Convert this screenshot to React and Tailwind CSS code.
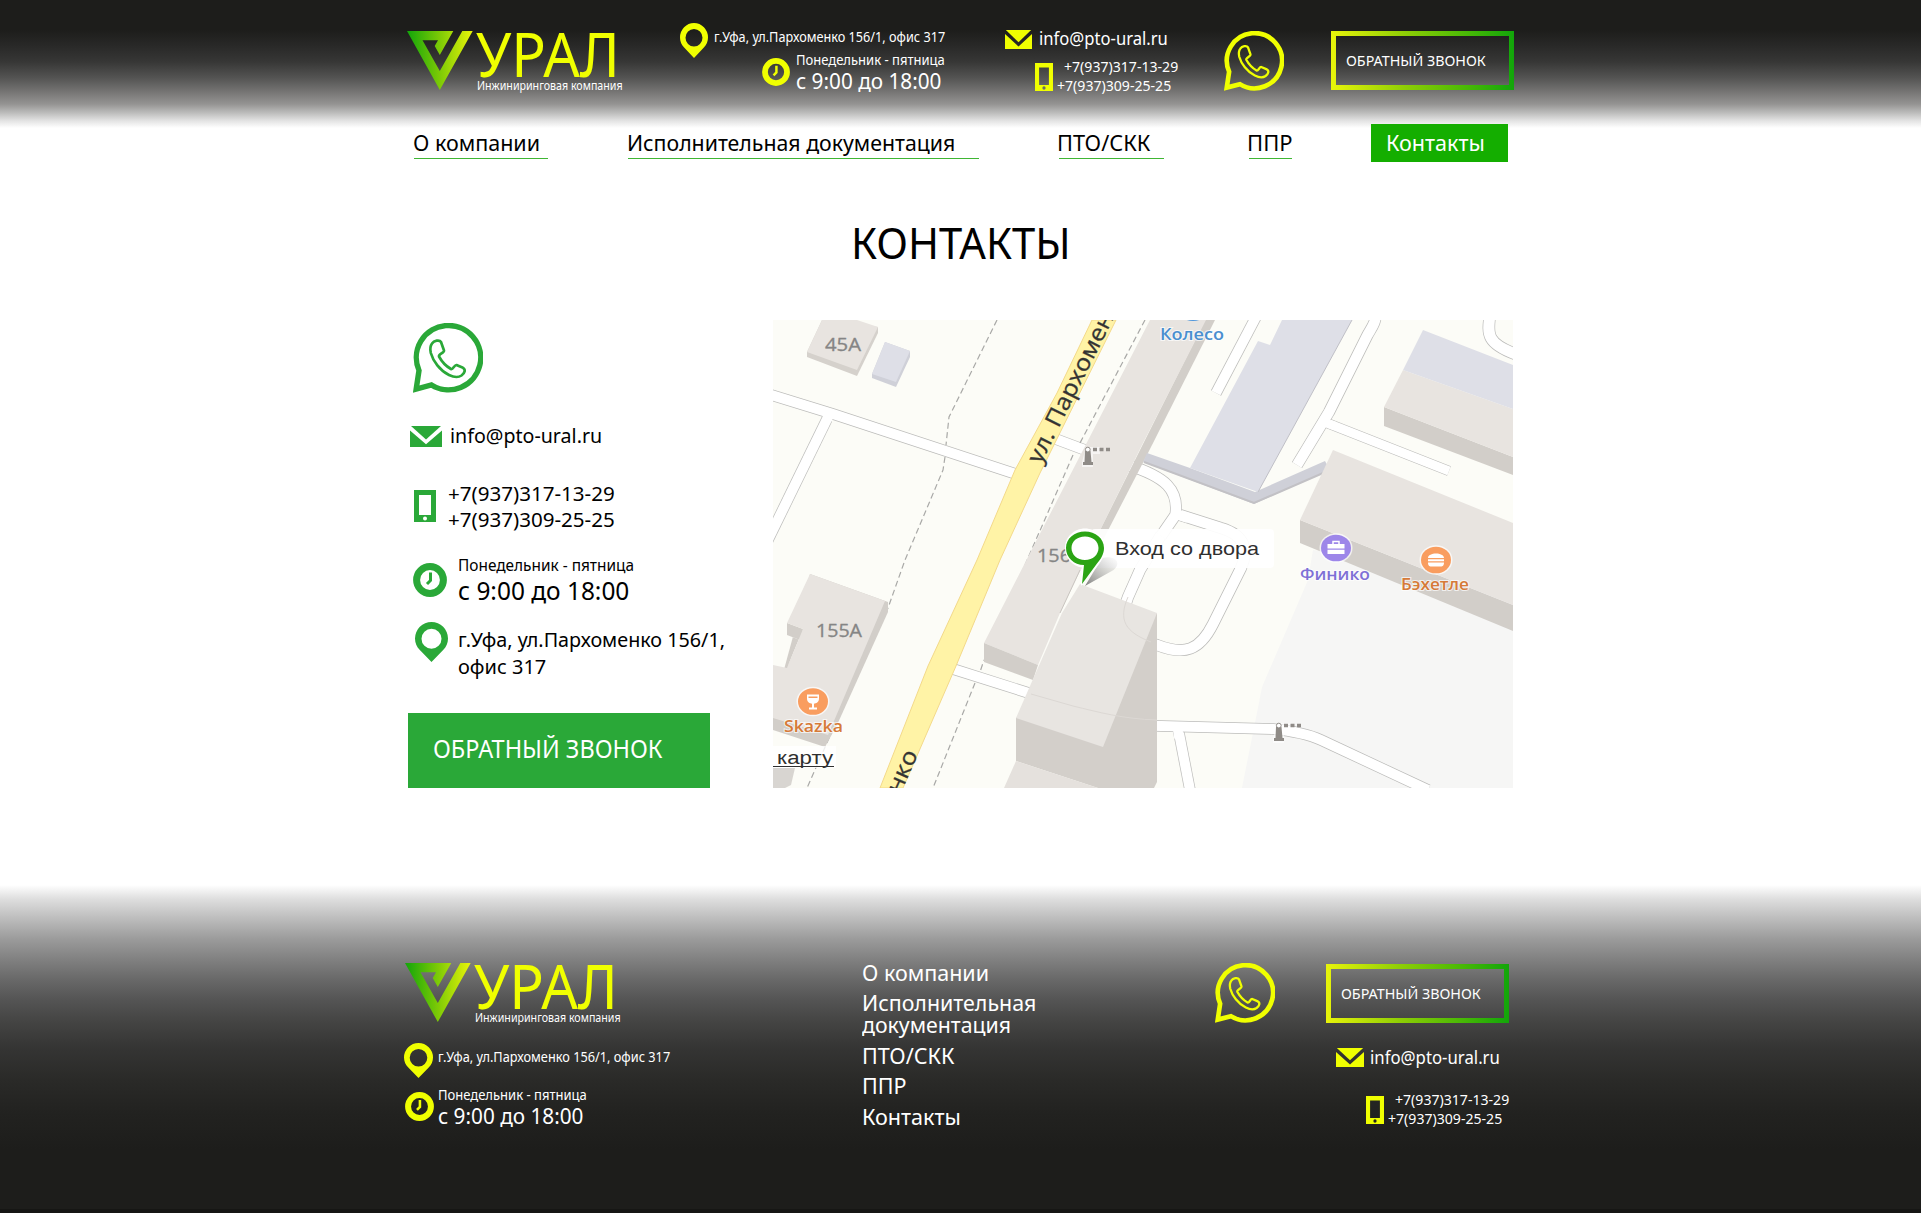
import { useLayoutEffect, useRef, useState } from "react";

/* One line of text, condensed or widened to the width of its box. */
function Line({ children, className = "" }) {
  const box = useRef(null);
  const ink = useRef(null);
  const [scale, setScale] = useState(1);
  useLayoutEffect(() => {
    const fit = () => {
      const natural = ink.current.offsetWidth;
      if (natural) setScale(box.current.clientWidth / natural);
    };
    fit();
    document.fonts?.ready.then(fit);
  }, []);
  return (
    <div ref={box} className={`shrink-0 whitespace-nowrap ${className}`}>
      <span ref={ink} className="inline-block origin-left" style={{ transform: `scaleX(${scale})` }}>
        {children}
      </span>
    </div>
  );
}

function LogoMark({ id }) {
  return (
    <svg viewBox="0 0 66 59" className="h-[59px] w-[66px] shrink-0">
      <defs>
        <linearGradient id={id} x1="0" y1="0" x2="1" y2="0">
          <stop offset="0" stopColor="#12a50a" />
          <stop offset="0.5" stopColor="#7dca06" />
          <stop offset="1" stopColor="#e9f409" />
        </linearGradient>
      </defs>
      <path
        fill={`url(#${id})`}
        d="M0 0H46.3L32.8 24L27.7 15L31 9.3H15.5L32.8 40L55.3 0H65.7L32.8 59Z"
      />
    </svg>
  );
}

function Logo({ id, className = "" }) {
  return (
    <div className={`flex h-[59px] w-[215px] shrink-0 ${className}`}>
      <LogoMark id={id} />
      <div className="ml-[3px]">
        <Line className="w-[144px] text-[62.6px] leading-[44px] text-[#f0ff00]">УРАЛ</Line>
        <Line className="mt-[3px] ml-px w-[146px] text-[11.7px] leading-[14px] text-white">
          Инжиниринговая компания
        </Line>
      </div>
    </div>
  );
}

function Pin({ className }) {
  return (
    <svg viewBox="0 0 33 40" preserveAspectRatio="none" className={`shrink-0 fill-current ${className}`}>
      <path
        fillRule="evenodd"
        d="M16.5 0A16.5 16.5 0 0 1 33 16.5C33 21 31.2 24.8 28.4 27.8L16.5 40L4.6 27.8C1.800 24.8 0 21 0 16.500A16.500 16.500 0 0 1 16.500 0ZM16.500 6.800A10 10 0 1 0 16.500 26.800A10 10 0 1 0 16.500 6.800Z"
      />
    </svg>
  );
}

function Clock({ className }) {
  return (
    <svg viewBox="0 0 34 34" className={`shrink-0 ${className}`} fill="none" stroke="currentColor">
      <circle cx="17" cy="17" r="13.4" strokeWidth="7" />
      <path d="M17.500 9.500V17.500L14 21" strokeWidth="3" />
    </svg>
  );
}

function Mail({ className }) {
  return (
    <svg viewBox="0 0 32 21" preserveAspectRatio="none" className={`shrink-0 fill-current ${className}`}>
      <path d="M1 0H31L16 13.500Z" />
      <path d="M0 4.500L16 18.300L32 4.500V21H0Z" />
    </svg>
  );
}

function Phone({ className }) {
  return (
    <svg viewBox="0 0 22 32" preserveAspectRatio="none" className={`shrink-0 fill-current ${className}`}>
      <path
        fillRule="evenodd"
        d="M0 0H22V32H0ZM5 5V25H17V5ZM11 26.500A2 2 0 1 0 11 30.500A2 2 0 1 0 11 26.500Z"
      />
    </svg>
  );
}

function WhatsApp({ className }) {
  return (
    <svg viewBox="0 0 70 70" className={`shrink-0 ${className}`} fill="none" stroke="currentColor">
      <path
        strokeWidth="5.400"
        d="M3.200 66L6 47.500A32.200 32.200 0 1 1 18.500 62Z"
      />
      <path
        strokeWidth="2.700"
        strokeLinejoin="round"
        d="M19 20.500C21 17.500 26.500 16.500 28 19L31 27.500C31.500 29.500 25 31.500 26 33.500C29 39 33.500 43.500 38 46C40 47 41.500 41.500 43.500 42L50 44.800C53 46.500 51.800 50 48.500 52.500C45.500 54.600 41 54.400 36 52C27 47.500 20 38 17.800 30C17 26.500 17.200 23 19 20.500Z"
      />
    </svg>
  );
}

function CallButton({ className = "" }) {
  return (
    <button
      className={`h-[59px] w-[183px] shrink-0 border-[5px] pb-[2px] pl-[10px] text-left text-white [border-image:linear-gradient(90deg,#e8f40a,#8fce05_40%,#47b806_75%,#12a50a)_5] ${className}`}
    >
      <Line className="w-[140px] text-[14.6px] leading-[46px]">ОБРАТНЫЙ ЗВОНОК</Line>
    </button>
  );
}

function Phones({ className }) {
  return (
    <div className={`flex items-start ${className}`}>
      <Phone className="mt-[6px] h-[28px] w-[18px] text-[#f0ff00]" />
      <div className="ml-[4px] text-[13.6px] leading-[19px] text-white">
        <Line className="ml-[7px] w-[114px]">+7(937)317-13-29</Line>
        <Line className="w-[114px]">+7(937)309-25-25</Line>
      </div>
    </div>
  );
}

function Hours() {
  return (
    <div className="text-white">
      <Line className="w-[149px] text-[13.8px] leading-[16px]">Понедельник - пятница</Line>
      <Line className="mt-px w-[145px] text-[21.6px] leading-[24px]">с 9:00 до 18:00</Line>
    </div>
  );
}

function Header() {
  return (
    <header className="h-[162px] bg-[linear-gradient(180deg,#1d1d1b_0px,#1d1d1b_30px,#282827_45px,#373736_62px,#545453_78px,#767574_92px,#949392_104px,#bdbdbc_113px,#e4e4e4_121px,#ffffff_128px)]">
      <div className="flex h-[124px] items-start pl-[407px]">
        <Logo id="logo-top" className="mt-[31px]" />
        <div className="mt-[23px] ml-[58px] flex w-[265px] flex-col items-end">
          <div className="flex items-start">
            <Pin className="h-[35px] w-[28px] text-[#f0ff00]" />
            <Line className="mt-[4px] ml-[6px] w-[231px] text-[13.8px] leading-[20px] text-white">
              г.Уфа, ул.Пархоменко 156/1, офис 317
            </Line>
          </div>
          <div className="-mt-[6px] flex items-start">
            <Clock className="mt-[6px] mr-[6px] h-[28px] w-[28px] text-[#f0ff00]" />
            <Hours />
          </div>
        </div>
        <div className="mt-[28px] ml-[60px] w-[173px]">
          <div className="flex items-start">
            <Mail className="mt-[2px] h-[19px] w-[27px] text-[#f0ff00]" />
            <Line className="ml-[7px] w-[129px] text-[17.4px] leading-[20px] text-white">info@pto-ural.ru</Line>
          </div>
          <Phones className="mt-[8px] ml-[30px]" />
        </div>
        <WhatsApp className="mt-[31px] ml-[46px] h-[60px] w-[60px] text-[#f0ff00]" />
        <CallButton className="mt-[31px] ml-[47px]" />
      </div>
      <nav className="flex h-[38px] items-start pl-[414px] text-[22px] leading-[34px] text-black">
        <a className="h-[35px] w-[134px] border-b border-[#3fb634] pt-px">
          <Line className="-ml-px w-[127px]">О компании</Line>
        </a>
        <a className="ml-[80px] h-[35px] w-[351px] border-b border-[#3fb634] pt-px">
          <Line className="-ml-px w-[328px]">Исполнительная документация</Line>
        </a>
        <a className="ml-[80px] h-[35px] w-[105px] border-b border-[#3fb634] pt-px">
          <Line className="-ml-[2px] w-[93px]">ПТО/СКК</Line>
        </a>
        <a className="ml-[85px] h-[35px] w-[43px] border-b border-[#3fb634] pt-px">
          <Line className="-ml-[2px] w-[46px]">ППР</Line>
        </a>
        <a className="ml-[79px] h-[38px] w-[137px] bg-[#14ae00] pt-px pl-[15px] text-white">
          <Line className="w-[99px]">Контакты</Line>
        </a>
      </nav>
    </header>
  );
}

function Road({ d, w = 10 }) {
  return (
    <g fill="none" strokeLinejoin="round">
      <path d={d} stroke="#bcbcba" strokeWidth={w + 1.4} />
      <path d={d} stroke="#ffffff" strokeWidth={w} />
    </g>
  );
}

function Bollard({ x, y }) {
  return (
    <g transform={`translate(${x} ${y})`}>
      <path d="M3 0H17V7H10V20H-1V15Z" fill="#fff" opacity="0.6" />
      <path d="M2 4H7.500L8.500 15H10V18H0V15H1.500Z" fill="#8f8b87" />
      <circle cx="4.800" cy="2.600" r="2.400" fill="#fff" stroke="#8f8b87" />
      <path d="M10 2.500H27" stroke="#8f8b87" strokeWidth="3.400" strokeDasharray="4 2.500" />
    </g>
  );
}

function PlaceDot({ x, y, color, children }) {
  return (
    <g transform={`translate(${x} ${y})`}>
      <ellipse rx="16.500" ry="14.800" fill="#fff" opacity="0.7" />
      <ellipse rx="15" ry="13.300" fill={color} />
      {children}
    </g>
  );
}

function CityMap() {
  return (
    <svg viewBox="0 0 740 468" className="h-[468px] w-[740px] shrink-0" fontFamily='"Open Sans", "Noto Sans", sans-serif'>
      <rect width="740" height="468" fill="#fcfcf7" />
      <path d="M540 230L535 260L489 367L484 393L469 468H740V250Z" fill="#f6f6f5" />

      <Road d="M-5 74L60 94L246 155" />
      <path d="M54 99L-6 222" stroke="#bcbcba" strokeWidth="11.400" />
      <path d="M56 95L-6 222" stroke="#fff" strokeWidth="10" />
      <Road d="M280 118L320 133" />
      <Road d="M404 194L448 208C472 215 476 230 468 248L440 304C427 330 412 336 384 325C352 315 346 300 355 277L367 250L388 215" w={10.500} />
      <Road d="M355 145C393 157 406 170 402.500 195L388 216" w={10.500} />
      <path d="M403 194L415 198" stroke="#fff" strokeWidth="10" />
      <Road d="M180 349L262 375" />
      <Road d="M405 408L417 470" />
      <Road d="M370 405.500L500 409C520 411 535 414 548 420L655 470" w={10} />
      <path d="M404 404L406 418" stroke="#fff" strokeWidth="9.500" />
      <Road d="M484 -5L443 73" />
      <Road d="M554 103L676 151" w={9} />
      <Road d="M603 -8C603 4 598 8 594 16L556 92L524 145" w={10.500} />
      <path d="M550 102L562 106" stroke="#fff" strokeWidth="8.500" />
      <Road d="M717 -5C714 15 714 24 745 35" w={11} />

      <path
        d="M319 0L284 73L242 150L204 240L155 346L107 468H130L183 346L227 240L267 153L343 0Z"
        fill="#fff3a6"
        stroke="#f3d98a"
        strokeWidth="1"
      />

      <g fill="none" stroke="#a9a9a7" strokeWidth="1.200" strokeDasharray="6 3.500">
        <path d="M224 0L176 97L173 125" />
        <path d="M172 137L170 150L132 240L115 288L64 400L34 468" />
        <path d="M372 0L307 123" />
        <path d="M300 135L255 238L210 343L207 352" />
        <path d="M202 363L160 468" />
      </g>

      <path d="M49 0L105 7V13L84 56L34 37V32Z" fill="#d5d1cc" />
      <path d="M49 0H84L105 7L84 50L34 32Z" fill="#e8e4e0" />
      <path d="M112 22L137 31V37L123 67L99 58V54Z" fill="#cfd0d8" />
      <path d="M112 22L137 31L123 62L99 54Z" fill="#dedfe7" />

      <path d="M432 0H442L375 133L329 222L307 250Z" fill="#d2cec9" />
      <path d="M377 0H433L369 125L310 245L287 293L265 345L211 323L257 233Z" fill="#e8e4e0" />
      <path d="M211 323L265 345L260 360L211 342Z" fill="#d2cec9" />
      <path d="M307 250L287 293" stroke="#c9c5c0" />

      <path d="M384 293V462L381 468H325L243 441V398Z" fill="#d3cfca" />
      <path d="M307 264L384 293L330 427L243 398L289 293Z" fill="#e8e5e1" />
      <path d="M243 441L325 468H231Z" fill="#e5e1dd" />
      <path d="M355 277C345 300 352 312 378 322M258 374L300 386C325 392 350 399 384 400" fill="none" stroke="#dcd8d4" />

      <path d="M37 254L115 282V292L64 405L52 427L0 410V390Z" fill="#d2cec9" />
      <path d="M0 340L14 348L30 309V303L14 303V315L27 320L14 348Z" fill="#fcfcf7" />
      <path d="M14 303L30 309L27 320L14 315Z" fill="#d2cec9" />
      <path d="M37 254L112 281L55 415L0 398V345L14 348L30 309L14 303Z" fill="#e8e4e0" />
      <path d="M0 448H22L18 465L12 468H0Z" fill="#d8d5d1" />

      <path d="M374 133L417 148L482 172L552 141L557 150L481 184L370 142Z" fill="#cfd0d8" />
      <path d="M371 142L481 183L557 150" fill="none" stroke="#c2c1c5" strokeWidth="2" />
      <path d="M509 0H579L485 172L417 148L485 21L497 25Z" fill="#dedfe7" />
      <path d="M579 0L485 172" stroke="#bfbfc6" />

      <path d="M611 87L740 137V155L611 106Z" fill="#d2cec9" />
      <path d="M630 50L740 89V137L611 87Z" fill="#e8e4e0" />
      <path d="M650 10L740 45V89L630 50Z" fill="#dedfe7" />

      <path d="M527 200L740 285V311L527 223Z" fill="#d2cec9" />
      <path d="M560 130L740 203V285L527 200Z" fill="#e8e4e0" />

      <Bollard x={310} y={127} />
      <Bollard x={501} y={403} />

      <g fill="#858585" stroke="#858585" strokeWidth="0.300" fontSize="17.500">
        <text x="52" y="31" textLength="36" lengthAdjust="spacingAndGlyphs">45A</text>
        <text x="43" y="317" textLength="46" lengthAdjust="spacingAndGlyphs">155A</text>
        <text x="264" y="242" textLength="34" lengthAdjust="spacingAndGlyphs">156</text>
      </g>

      <g fill="#333" stroke="#333" strokeWidth="0.300" fontSize="23">
        <text transform="translate(267.500 145) rotate(-63.500)" textLength="194" lengthAdjust="spacingAndGlyphs">
          ул. Пархоменко
        </text>
        <text transform="translate(127 475) rotate(-66)" textLength="45" lengthAdjust="spacingAndGlyphs">
          нко
        </text>
      </g>

      <ellipse cx="420" cy="-9" rx="14" ry="10" fill="#4f97dc" />
      <PlaceDot x={563} y={228} color="#9d86e9">
        <path d="M-8.500 -4H8.500V0.500H-8.500ZM-8.500 1.800H8.500V6H-8.500Z" fill="#fff" />
        <path d="M-3 -4V-6.500H3V-4" fill="none" stroke="#fff" strokeWidth="1.500" />
      </PlaceDot>
      <PlaceDot x={663} y={240} color="#f99d5f">
        <path d="M-8 -2C-8 -8 8 -8 8 -2ZM-8 -0.800H8V1.200H-8ZM-8 2.400H8C8 6 6 6.500 4 6.500H-4C-6 6.500 -8 6 -8 2.400Z" fill="#fff" />
      </PlaceDot>
      <PlaceDot x={40} y={381.500} color="#f99d5f">
        <path d="M-6 -7H6V-3C6 1 3 2 1 2.200V6H4V8H-4V6H-1V2.200C-3 2 -6 1 -6 -3Z" fill="#fff" />
        <path d="M-4.500 -5H4.500V-3.500H-4.500Z" fill="#f99d5f" />
      </PlaceDot>

      <g fontSize="15.500" fontWeight="600" stroke="#fff" strokeWidth="2" paintOrder="stroke" strokeOpacity="0.7">
        <text x="387" y="19.500" fill="#4a8fd0" textLength="64" lengthAdjust="spacingAndGlyphs">Колесо</text>
        <text x="527" y="260" fill="#7e70d6" textLength="70" lengthAdjust="spacingAndGlyphs">Финико</text>
        <text x="628" y="270" fill="#d67a38" textLength="68" lengthAdjust="spacingAndGlyphs">Бэхетле</text>
        <text x="11" y="412" fill="#d67a38" textLength="59" lengthAdjust="spacingAndGlyphs">Skazka</text>
      </g>

      <rect x="0" y="426" width="63" height="22" fill="#fff" opacity="0.8" />
      <g fontFamily='"Liberation Sans", Arial, sans-serif' fill="#2f2f2f">
        <text x="4" y="444" fontSize="18" textLength="56" lengthAdjust="spacingAndGlyphs">карту</text>
        <path d="M0 446.500H61" stroke="#2f2f2f" strokeWidth="1.200" />
        <rect x="318" y="209" width="183" height="39" rx="4" fill="#fff" opacity="0.93" />
        <text x="342" y="235" fontSize="19" textLength="144" lengthAdjust="spacingAndGlyphs">Вход со двора</text>
      </g>

      <defs>
        <linearGradient id="pin-shadow" x1="0" y1="1" x2="1" y2="0">
          <stop offset="0" stopColor="#555" stopOpacity="0.75" />
          <stop offset="1" stopColor="#999" stopOpacity="0" />
        </linearGradient>
      </defs>
      <path d="M312 266L329 238C345 234 350 246 337 252Z" fill="url(#pin-shadow)" />
      <path
        d="M312 208.500C323 208.500 332 217 332 228C332 237 327 243 323 248L308 266L309 247.500C299 246 292 238 292 228C292 217 301 208.500 312 208.500Z"
        fill="#fff"
      />
      <path
        fillRule="evenodd"
        d="M312 211.500C322.500 211.500 331 218.500 331 228C331 234 328 239 324 243.500L309 264L311 245C301 245 293 237.500 293 228C293 218.500 301.500 211.500 312 211.500ZM312 216.500C304 216.500 298.500 221.500 298.500 228C298.500 234.500 304 240 312 240C320 240 325.500 234.500 325.500 228C325.500 221.500 320 216.500 312 216.500Z"
        fill="#2ba414"
      />
    </svg>
  );
}

function Contacts() {
  return (
    <main>
      <h1 className="flex justify-center pt-[55px] text-[44.4px] leading-[50px] text-black">
        <Line className="w-[220px]">КОНТАКТЫ</Line>
      </h1>
      <div className="mt-[53px] flex items-start pl-[408px]">
        <div className="w-[365px] shrink-0 text-black">
          <WhatsApp className="mt-[3px] ml-[5px] h-[70px] w-[70px] text-[#2aa838]" />
          <div className="mt-[31px] flex items-start">
            <Mail className="mt-[2px] ml-[2px] h-[21px] w-[32px] text-[#2aa838]" />
            <Line className="ml-[8px] w-[152px] text-[20px] leading-[24px]">info@pto-ural.ru</Line>
          </div>
          <div className="mt-[32px] flex items-start">
            <Phone className="mt-[10px] ml-[6px] h-[32px] w-[22px] text-[#2aa838]" />
            <div className="ml-[12px] text-[20.2px] leading-[26px]">
              <Line className="w-[167px]">+7(937)317-13-29</Line>
              <Line className="w-[167px]">+7(937)309-25-25</Line>
            </div>
          </div>
          <div className="mt-[23px] flex items-start">
            <Clock className="mt-[8px] ml-[5px] h-[34px] w-[34px] text-[#2aa838]" />
            <div className="ml-[11px]">
              <Line className="w-[176px] text-[16.2px] leading-[20px]">Понедельник - пятница</Line>
              <Line className="mt-px w-[171px] text-[25px] leading-[28px]">с 9:00 до 18:00</Line>
            </div>
          </div>
          <div className="mt-[18px] flex items-start">
            <Pin className="ml-[7px] h-[40px] w-[33px] text-[#2aa838]" />
            <div className="mt-[4px] ml-[10px] text-[20.2px] leading-[27px]">
              <Line className="w-[267px]">г.Уфа, ул.Пархоменко 156/1,</Line>
              <Line className="w-[88px]">офис 317</Line>
            </div>
          </div>
          <button className="mt-[33px] block h-[75px] w-[302px] bg-[#2aa838] pb-[5px] pl-[25px] text-left text-white">
            <Line className="w-[229px] text-[25px] leading-[66px]">ОБРАТНЫЙ ЗВОНОК</Line>
          </button>
        </div>
        <CityMap />
      </div>
    </main>
  );
}

function Footer() {
  return (
    <footer className="mt-[97px] flex h-[328px] items-start border-b-4 border-[#161614] bg-[linear-gradient(180deg,#ffffff_0px,#dedede_14px,#bfbfbf_32px,#9b9b9b_54px,#818181_74px,#696969_94px,#555555_114px,#464645_134px,#353534_162px,#2a2a28_195px,#222220_228px,#1d1d1b_265px)] pt-[78px] pl-[404px]">
      <div className="w-[458px] shrink-0">
        <Logo id="logo-bottom" className="ml-px" />
        <div className="mt-[21px] flex items-start">
          <Pin className="h-[35px] w-[29px] text-[#f0ff00]" />
          <Line className="mt-[4px] ml-[5px] w-[232px] text-[13.8px] leading-[20px] text-white">
            г.Уфа, ул.Пархоменко 156/1, офис 317
          </Line>
        </div>
        <div className="mt-[9px] flex items-start">
          <Clock className="mt-[5px] mr-[4px] ml-px h-[29px] w-[29px] text-[#f0ff00]" />
          <Hours />
        </div>
      </div>
      <nav className="-mt-[2px] w-[353px] shrink-0 text-[22px] leading-[22px] text-white">
        <Line className="w-[127px]">О компании</Line>
        <div className="mt-[8px]">
          <Line className="w-[174px]">Исполнительная</Line>
          <Line className="w-[149px]">документация</Line>
        </div>
        <Line className="mt-[9px] w-[92px]">ПТО/СКК</Line>
        <Line className="mt-[8px] w-[45px]">ППР</Line>
        <Line className="mt-[9px] w-[99px]">Контакты</Line>
      </nav>
      <div className="shrink-0">
        <div className="flex h-[59px] items-start">
          <WhatsApp className="h-[60px] w-[60px] text-[#f0ff00]" />
          <CallButton className="mt-px ml-[51px]" />
        </div>
        <div className="mt-[25px] ml-[121px] flex items-start">
          <Mail className="mt-px h-[19px] w-[28px] text-[#f0ff00]" />
          <Line className="ml-[6px] w-[130px] text-[17.4px] leading-[20px] text-white">info@pto-ural.ru</Line>
        </div>
        <Phones className="mt-[23px] ml-[151px]" />
      </div>
    </footer>
  );
}

export default function App() {
  return (
    <div className="h-[1213px] w-[1921px] overflow-hidden bg-white font-['Noto_Sans','Open_Sans',sans-serif]">
      <Header />
      <Contacts />
      <Footer />
    </div>
  );
}
